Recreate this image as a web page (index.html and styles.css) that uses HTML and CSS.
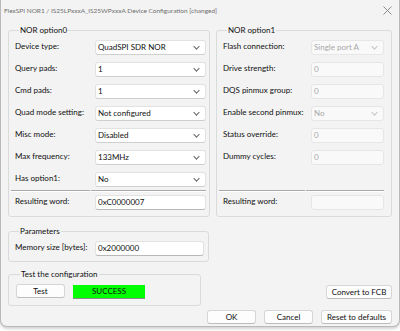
FILE: index.html
```html
<!DOCTYPE html>
<html>
<head>
<meta charset="utf-8">
<link rel="stylesheet" href="styles.css">
</head>
<body>
<div class="window">
  <div class="titlebar">
    <span class="title">FlexSPI NOR1 / IS25LPxxxA_IS25WPxxxA Device Configuration [changed]</span>
    <svg class="close" width="9" height="9" viewBox="0 0 9 9"><path d="M0.5 0.5 L8.5 8.5 M8.5 0.5 L0.5 8.5" stroke="#8a8a8a" stroke-width="1" fill="none"/></svg>
  </div>
  <div class="content">
    <div class="top">
      <div class="group g0">
        <div class="legend">NOR option0</div>
        <div class="rows">
          <div class="label">Device type:</div><div class="combo"><span>QuadSPI SDR NOR</span><i class="chev"></i></div>
          <div class="label">Query pads:</div><div class="combo"><span>1</span><i class="chev"></i></div>
          <div class="label">Cmd pads:</div><div class="combo"><span>1</span><i class="chev"></i></div>
          <div class="label">Quad mode setting:</div><div class="combo"><span>Not configured</span><i class="chev"></i></div>
          <div class="label">Misc mode:</div><div class="combo"><span>Disabled</span><i class="chev"></i></div>
          <div class="label">Max frequency:</div><div class="combo"><span>133MHz</span><i class="chev"></i></div>
          <div class="label">Has option1:</div><div class="combo"><span>No</span><i class="chev"></i></div>
        </div>
        <div class="sep"><span class="s1"></span><span class="s2"></span></div>
        <div class="rows result">
          <div class="label">Resulting word:</div><div class="field"><span>0xC0000007</span></div>
        </div>
      </div>
      <div class="group g1">
        <div class="legend">NOR option1</div>
        <div class="rows">
          <div class="label">Flash connection:</div><div class="combo dis"><span>Single port A</span><i class="chev"></i></div>
          <div class="label">Drive strength:</div><div class="field dis"><span>0</span></div>
          <div class="label">DQS pinmux group:</div><div class="field dis"><span>0</span></div>
          <div class="label">Enable second pinmux:</div><div class="combo dis"><span>No</span><i class="chev"></i></div>
          <div class="label">Status override:</div><div class="field dis"><span>0</span></div>
          <div class="label">Dummy cycles:</div><div class="field dis"><span>0</span></div>
          <div class="label"></div><div class="blank"></div>
        </div>
        <div class="sep"><span class="s1"></span><span class="s2"></span></div>
        <div class="rows result">
          <div class="label">Resulting word:</div><div class="field dis"><span></span></div>
        </div>
      </div>
    </div>
    <div class="group params">
      <div class="legend">Parameters</div>
      <div class="rows">
        <div class="label">Memory size [bytes]:</div><div class="field"><span>0x2000000</span></div>
      </div>
    </div>
    <div class="testrow">
      <div class="group test">
        <div class="legend">Test the configuration</div>
        <div class="testbody">
          <button class="btn btn-test">Test</button>
          <div class="success">SUCCESS</div>
        </div>
      </div>
      <button class="btn btn-convert">Convert to FCB</button>
    </div>
    <div class="footer">
      <button class="btn btn-ok">OK</button>
      <button class="btn btn-cancel">Cancel</button>
      <button class="btn btn-reset">Reset to defaults</button>
    </div>
  </div>
</div>
</body>
</html>
```
FILE: styles.css
```css
* { box-sizing: border-box; }
html, body { margin: 0; padding: 0; }
body {
  width: 400px;
  height: 331px;
  background: #ffffff;
  font-family: Lato, "Noto Sans", sans-serif;
  font-size: 8px;
  color: #0f0f0f;
  overflow: hidden;
}
.window {
  width: 400px;
  height: 327px;
  background: #f3f3f3;
  border: 1px solid #b9b9b9;
  border-top: none;
  border-radius: 0 0 7px 7px;
  box-shadow: 0 2px 3px rgba(0,0,0,0.18);
  display: flex;
  flex-direction: column;
}
.titlebar {
  height: 20px;
  display: flex;
  align-items: center;
  justify-content: space-between;
  padding: 0 7px 0 3px;
  color: #6f6f6f;
  font-size: 6.5px;
}
.close { display: block; }
.content {
  padding: 10px 7px 0 7px;
  display: flex;
  flex-direction: column;
}
.top { display: flex; gap: 6px; }
.group {
  border: 1px solid #dadada;
  border-radius: 3px;
}
.legend {
  width: fit-content;
  height: 11px;
  line-height: 11px;
  margin: -6px 0 0 4px;
  padding: 0 1px;
  background: #f3f3f3;
  color: #0f0f0f;
}
.g0 { width: 202px; height: 187px; padding: 0 3px 0 6px; }
.g1 { width: 176px; height: 187px; padding: 0 7px 0 6px; }
.rows {
  display: grid;
  row-gap: 7px;
  padding-top: 4px;
}
.g0 .rows { grid-template-columns: 80px 111px; }
.g1 .rows { grid-template-columns: 88px 73px; }
.rows.result { padding-top: 3px; }
.label {
  height: 15px;
  line-height: 12px;
  white-space: nowrap;
}
.combo, .field {
  height: 15px;
  background: #ffffff;
  border: 1px solid #e2e2e2;
  border-bottom-color: #cfcfcf;
  border-radius: 3px;
  display: flex;
  align-items: center;
  justify-content: space-between;
  padding: 0 6px 0 2px;
  line-height: 13px;
  color: #0f0f0f;
}
.field { border-bottom-color: #b8b8b8; }
.combo.dis, .field.dis {
  background: #f9f9f9;
  border-color: #e6e6e6;
  color: #a8a8a8;
}
.blank { height: 15px; }
.chev {
  width: 5px;
  height: 5px;
  border-right: 1px solid #606060;
  border-bottom: 1px solid #606060;
  transform: rotate(45deg) scale(0.9, 0.9);
  margin-top: -3px;
}
.dis .chev { border-color: #c2c2c2; }
.sep {
  display: flex;
  gap: 1px;
  margin-top: 3px;
  height: 2px;
}
.sep span { border-top: 1px solid #a9a9a9; border-bottom: 1px solid #ffffff; }
.g0 .sep { margin-left: -4px; }
.g0 .s1 { width: 79px; }
.g0 .s2 { width: 115px; }
.g1 .sep { margin-left: -4px; }
.g1 .s1 { width: 88px; }
.g1 .s2 { width: 79px; }
.params {
  margin-top: 14px;
  width: 201px;
  height: 31px;
  padding: 0 4px 0 6px;
}
.params .rows { grid-template-columns: 80px 109px; }
.testrow {
  margin-top: 12px;
  display: flex;
  justify-content: space-between;
  align-items: flex-end;
}
.test {
  width: 193px;
  height: 32px;
  padding: 0 6px 0 7px;
}
.testbody {
  display: flex;
  gap: 8px;
  padding-top: 4px;
}
.btn {
  font-family: Lato, "Noto Sans", sans-serif;
  font-size: 8px;
  color: #0f0f0f;
  background: #fdfdfd;
  border: 1px solid #d6d6d6;
  border-bottom-color: #bdbdbd;
  border-radius: 3px;
  height: 14px;
  padding: 0;
  line-height: 12px;
  text-align: center;
}
.btn-test { width: 49px; }
.success {
  width: 72px;
  height: 14px;
  margin-top: 1px;
  background: #00ff00;
  border-bottom: 1px solid #8a8a8a;
  text-align: center;
  line-height: 12px;
  color: #0f0f0f;
}
.btn-convert { width: 66px; margin-bottom: 7px; }
.footer {
  margin-top: 4px;
  display: flex;
  justify-content: flex-end;
  gap: 8px;
}
.btn-ok, .btn-cancel { width: 49px; }
.btn-reset { width: 71px; }
```
